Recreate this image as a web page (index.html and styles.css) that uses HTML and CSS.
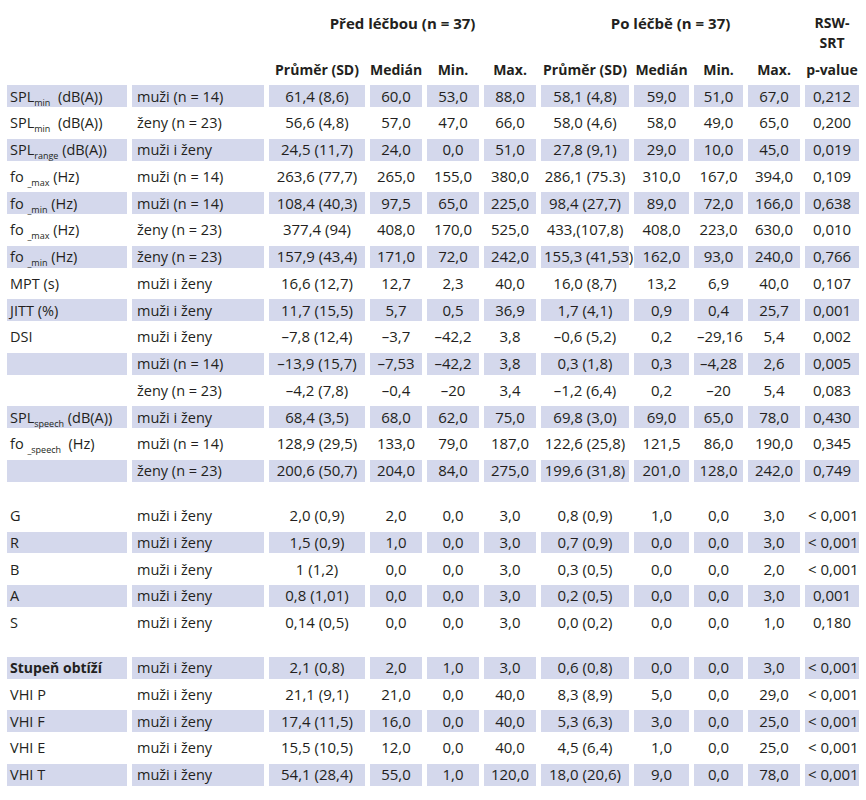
FILE: index.html
```html
<!DOCTYPE html>
<html>
<head>
  <title>Výsledky před a po léčbě</title>
  <link rel="stylesheet" href="styles.css">
</head>
<body>
  <table class="results">
    <colgroup>
      <col class="c-param">
      <col class="c-group">
      <col class="c-mean">
      <col class="c-med">
      <col class="c-min">
      <col class="c-max">
      <col class="c-mean2">
      <col class="c-med2">
      <col class="c-min2">
      <col class="c-max2">
      <col class="c-p">
    </colgroup>
    <thead>
      <tr class="head-top">
        <th></th>
        <th></th>
        <th colspan="4" class="group-title">Před léčbou (n = 37)</th>
        <th colspan="4" class="group-title">Po léčbě (n = 37)</th>
        <th>RSW-<br>SRT</th>
      </tr>
      <tr class="head-cols">
        <th></th>
        <th></th>
        <th>Průměr (SD)</th>
        <th>Medián</th>
        <th>Min.</th>
        <th>Max.</th>
        <th>Průměr (SD)</th>
        <th>Medián</th>
        <th>Min.</th>
        <th>Max.</th>
        <th>p-value</th>
      </tr>
    </thead>
    <tbody>
      <tr class="shaded"><td>SPL<sub>min</sub>&nbsp;&nbsp;(dB(A))</td><td>muži (n = 14)</td><td>61,4 (8,6)</td><td>60,0</td><td>53,0</td><td>88,0</td><td>58,1 (4,8)</td><td>59,0</td><td>51,0</td><td>67,0</td><td>0,212</td></tr>
      <tr><td>SPL<sub>min</sub>&nbsp;&nbsp;(dB(A))</td><td>ženy (n = 23)</td><td>56,6 (4,8)</td><td>57,0</td><td>47,0</td><td>66,0</td><td>58,0 (4,6)</td><td>58,0</td><td>49,0</td><td>65,0</td><td>0,200</td></tr>
      <tr class="shaded"><td>SPL<sub>range</sub> (dB(A))</td><td>muži i ženy</td><td>24,5 (11,7)</td><td>24,0</td><td>0,0</td><td>51,0</td><td>27,8 (9,1)</td><td>29,0</td><td>10,0</td><td>45,0</td><td>0,019</td></tr>
      <tr><td>fo <sub>_max</sub> (Hz)</td><td>muži (n = 14)</td><td>263,6 (77,7)</td><td>265,0</td><td>155,0</td><td>380,0</td><td>286,1 (75.3)</td><td>310,0</td><td>167,0</td><td>394,0</td><td>0,109</td></tr>
      <tr class="shaded"><td>fo <sub>_min</sub> (Hz)</td><td>muži (n = 14)</td><td>108,4 (40,3)</td><td>97,5</td><td>65,0</td><td>225,0</td><td>98,4 (27,7)</td><td>89,0</td><td>72,0</td><td>166,0</td><td>0,638</td></tr>
      <tr><td>fo <sub>_max</sub> (Hz)</td><td>ženy (n = 23)</td><td>377,4 (94)</td><td>408,0</td><td>170,0</td><td>525,0</td><td>433,(107,8)</td><td>408,0</td><td>223,0</td><td>630,0</td><td>0,010</td></tr>
      <tr class="shaded"><td>fo <sub>_min</sub> (Hz)</td><td>ženy (n = 23)</td><td>157,9 (43,4)</td><td>171,0</td><td>72,0</td><td>242,0</td><td>155,3 (41,53)</td><td>162,0</td><td>93,0</td><td>240,0</td><td>0,766</td></tr>
      <tr><td>MPT (s)</td><td>muži i ženy</td><td>16,6 (12,7)</td><td>12,7</td><td>2,3</td><td>40,0</td><td>16,0 (8,7)</td><td>13,2</td><td>6,9</td><td>40,0</td><td>0,107</td></tr>
      <tr class="shaded"><td>JITT (%)</td><td>muži i ženy</td><td>11,7 (15,5)</td><td>5,7</td><td>0,5</td><td>36,9</td><td>1,7 (4,1)</td><td>0,9</td><td>0,4</td><td>25,7</td><td>0,001</td></tr>
      <tr><td>DSI</td><td>muži i ženy</td><td>–7,8 (12,4)</td><td>–3,7</td><td>–42,2</td><td>3,8</td><td>–0,6 (5,2)</td><td>0,2</td><td>–29,16</td><td>5,4</td><td>0,002</td></tr>
      <tr class="shaded"><td></td><td>muži (n = 14)</td><td>–13,9 (15,7)</td><td>–7,53</td><td>–42,2</td><td>3,8</td><td>0,3 (1,8)</td><td>0,3</td><td>–4,28</td><td>2,6</td><td>0,005</td></tr>
      <tr><td></td><td>ženy (n = 23)</td><td>–4,2 (7,8)</td><td>–0,4</td><td>–20</td><td>3,4</td><td>–1,2 (6,4)</td><td>0,2</td><td>–20</td><td>5,4</td><td>0,083</td></tr>
      <tr class="shaded"><td>SPL<sub>speech</sub> (dB(A))</td><td>muži i ženy</td><td>68,4 (3,5)</td><td>68,0</td><td>62,0</td><td>75,0</td><td>69,8 (3,0)</td><td>69,0</td><td>65,0</td><td>78,0</td><td>0,430</td></tr>
      <tr><td>fo <sub>_speech</sub>&nbsp; (Hz)</td><td>muži (n = 14)</td><td>128,9 (29,5)</td><td>133,0</td><td>79,0</td><td>187,0</td><td>122,6 (25,8)</td><td>121,5</td><td>86,0</td><td>190,0</td><td>0,345</td></tr>
      <tr class="shaded"><td></td><td>ženy (n = 23)</td><td>200,6 (50,7)</td><td>204,0</td><td>84,0</td><td>275,0</td><td>199,6 (31,8)</td><td>201,0</td><td>128,0</td><td>242,0</td><td>0,749</td></tr>

      <tr class="spacer"><td colspan="11"></td></tr>

      <tr><td>G</td><td>muži i ženy</td><td>2,0 (0,9)</td><td>2,0</td><td>0,0</td><td>3,0</td><td>0,8 (0,9)</td><td>1,0</td><td>0,0</td><td>3,0</td><td>&lt; 0,001</td></tr>
      <tr class="shaded"><td>R</td><td>muži i ženy</td><td>1,5 (0,9)</td><td>1,0</td><td>0,0</td><td>3,0</td><td>0,7 (0,9)</td><td>0,0</td><td>0,0</td><td>3,0</td><td>&lt; 0,001</td></tr>
      <tr><td>B</td><td>muži i ženy</td><td>1 (1,2)</td><td>0,0</td><td>0,0</td><td>3,0</td><td>0,3 (0,5)</td><td>0,0</td><td>0,0</td><td>2,0</td><td>&lt; 0,001</td></tr>
      <tr class="shaded"><td>A</td><td>muži i ženy</td><td>0,8 (1,01)</td><td>0,0</td><td>0,0</td><td>3,0</td><td>0,2 (0,5)</td><td>0,0</td><td>0,0</td><td>3,0</td><td>0,001</td></tr>
      <tr><td>S</td><td>muži i ženy</td><td>0,14 (0,5)</td><td>0,0</td><td>0,0</td><td>3,0</td><td>0,0 (0,2)</td><td>0,0</td><td>0,0</td><td>1,0</td><td>0,180</td></tr>

      <tr class="spacer"><td colspan="11"></td></tr>

      <tr class="shaded"><td><b>Stupeň obtíží</b></td><td>muži i ženy</td><td>2,1 (0,8)</td><td>2,0</td><td>1,0</td><td>3,0</td><td>0,6 (0,8)</td><td>0,0</td><td>0,0</td><td>3,0</td><td>&lt; 0,001</td></tr>
      <tr><td>VHI P</td><td>muži i ženy</td><td>21,1 (9,1)</td><td>21,0</td><td>0,0</td><td>40,0</td><td>8,3 (8,9)</td><td>5,0</td><td>0,0</td><td>29,0</td><td>&lt; 0,001</td></tr>
      <tr class="shaded"><td>VHI F</td><td>muži i ženy</td><td>17,4 (11,5)</td><td>16,0</td><td>0,0</td><td>40,0</td><td>5,3 (6,3)</td><td>3,0</td><td>0,0</td><td>25,0</td><td>&lt; 0,001</td></tr>
      <tr><td>VHI E</td><td>muži i ženy</td><td>15,5 (10,5)</td><td>12,0</td><td>0,0</td><td>40,0</td><td>4,5 (6,4)</td><td>1,0</td><td>0,0</td><td>25,0</td><td>&lt; 0,001</td></tr>
      <tr class="shaded"><td>VHI T</td><td>muži i ženy</td><td>54,1 (28,4)</td><td>55,0</td><td>1,0</td><td>120,0</td><td>18,0 (20,6)</td><td>9,0</td><td>0,0</td><td>78,0</td><td>&lt; 0,001</td></tr>
    </tbody>
  </table>
</body>
</html>
```

FILE: styles.css
```css
body {
  margin: 0;
  background: #fff;
  color: #231f20;
  font-family: "Open Sans", "Noto Sans", sans-serif;
  font-size: 15px;
}

.results {
  table-layout: fixed;
  width: 862px;
  margin-left: 2px;
  border-collapse: separate;
  border-spacing: 5px 5px;
}

.c-param { width: 120px; }
.c-group { width: 132px; }
.c-mean { width: 96px; }
.c-med { width: 52px; }
.c-min { width: 52px; }
.c-max { width: 52px; }
.c-mean2 { width: 88px; }
.c-med2 { width: 55px; }
.c-min2 { width: 49px; }
.c-max2 { width: 52px; }
.c-p { width: 54px; }

.results th {
  font-size: 14px;
  font-weight: bold;
  text-align: center;
  padding: 0;
  white-space: nowrap;
}

.head-top th {
  vertical-align: top;
  padding-top: 7.5px;
  line-height: 20.5px;
}

.head-top .group-title {
  font-size: 15px;
}

.head-cols th {
  height: 21.75px;
  line-height: 21px;
  vertical-align: middle;
}

.results td {
  height: 21.75px;
  padding: 0 3px;
  line-height: 21px;
  vertical-align: middle;
  white-space: nowrap;
  text-align: center;
}

.results td:nth-child(1) {
  text-align: left;
  font-size: 14.5px;
}

.results td:nth-child(2) {
  text-align: left;
  padding-left: 5px;
  font-size: 14.5px;
}

.results td b {
  font-size: 14px;
}

.shaded td {
  background-color: #d4d8ec;
}

.spacer td {
  height: 13.25px;
  padding: 0;
}

sub {
  font-size: 9px;
  line-height: 0;
  vertical-align: -4px;
}
```
